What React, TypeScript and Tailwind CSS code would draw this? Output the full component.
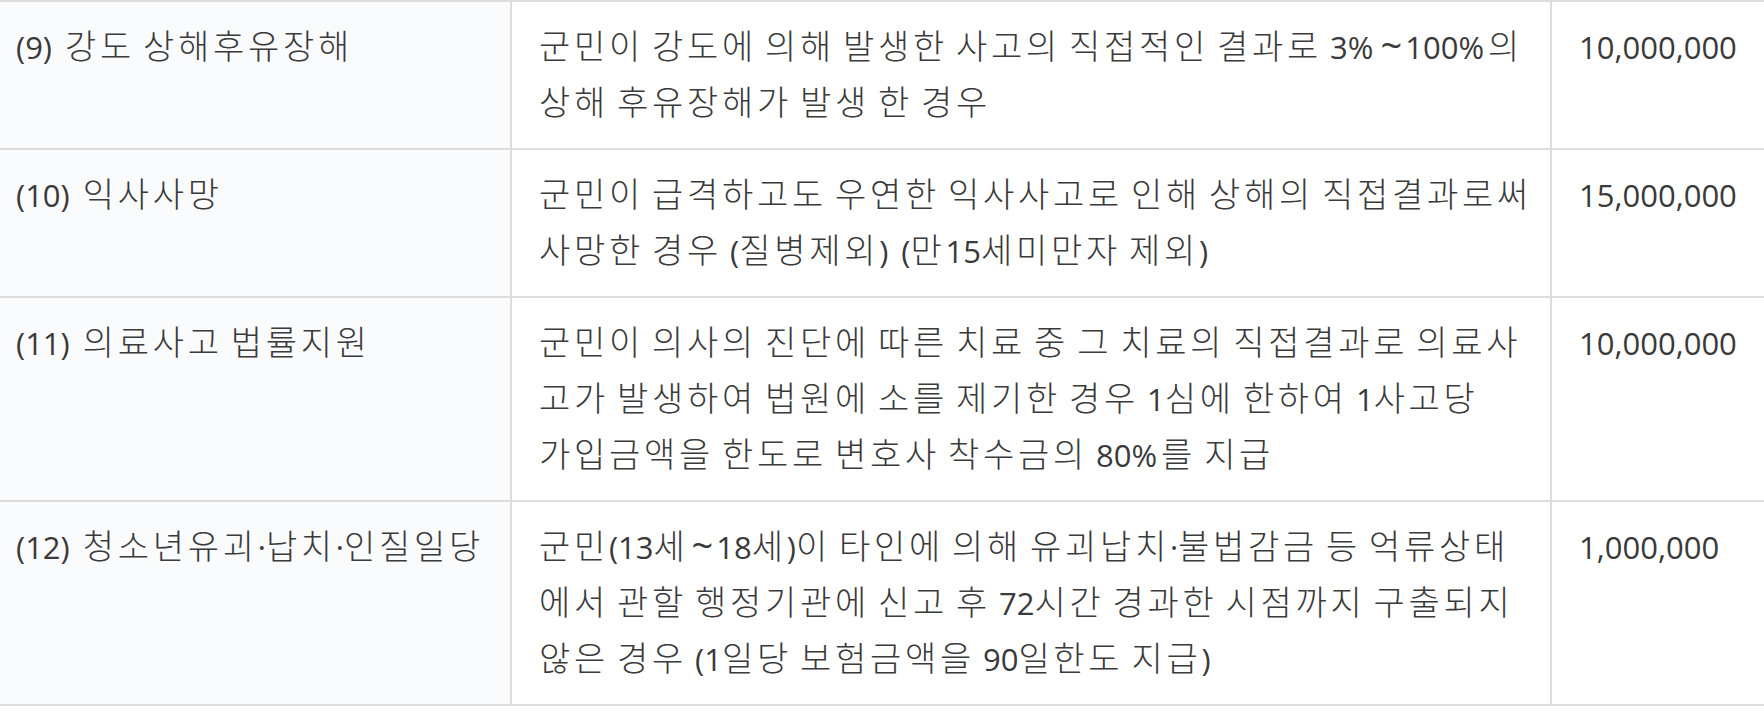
import React from "react";

type Row = { name: string; desc: string[]; amount: string };

const rows: Row[] = [
  {
    name: "(9) 강도 상해후유장해",
    desc: ["군민이 강도에 의해 발생한 사고의 직접적인 결과로 3%~100%의", "상해 후유장해가 발생 한 경우"],
    amount: "10,000,000",
  },
  {
    name: "(10) 익사사망",
    desc: ["군민이 급격하고도 우연한 익사사고로 인해 상해의 직접결과로써", "사망한 경우 (질병제외) (만15세미만자 제외)"],
    amount: "15,000,000",
  },
  {
    name: "(11) 의료사고 법률지원",
    desc: [
      "군민이 의사의 진단에 따른 치료 중 그 치료의 직접결과로 의료사",
      "고가 발생하여 법원에 소를 제기한 경우 1심에 한하여 1사고당",
      "가입금액을 한도로 변호사 착수금의 80%를 지급",
    ],
    amount: "10,000,000",
  },
  {
    name: "(12) 청소년유괴·납치·인질일당",
    desc: [
      "군민(13세~18세)이 타인에 의해 유괴납치·불법감금 등 억류상태",
      "에서 관할 행정기관에 신고 후 72시간 경과한 시점까지 구출되지",
      "않은 경우 (1일당 보험금액을 90일한도 지급)",
    ],
    amount: "1,000,000",
  },
];

const HANGUL = /[\uAC00-\uD7A3]/;

function Latin({ p, afterHangul }: { p: string; afterHangul: boolean }) {
  const toks = p.split(/([%~ ])/).filter((t) => t !== "");
  return (
    <>
      {toks.map((t, i) => {
        if (t === "%") return <span key={i} className="tracking-[4px]">%</span>;
        if (t === "~")
          return (
            <span key={i} className="text-[38px] leading-none mx-[3px]">
              ~
            </span>
          );
        if (t === " " && !(i === 0 && afterHangul))
          return <span key={i} className="mr-[5px]"> </span>;
        return <span key={i}>{t}</span>;
      })}
    </>
  );
}

function Txt({ s }: { s: string }) {
  const parts = s.split(/([\uAC00-\uD7A3]+)/);
  return (
    <>
      {parts.map((p, i) =>
        HANGUL.test(p) ? (
          <span key={i} className="text-[34px] leading-none tracking-[3.7px] font-light">
            {p}
          </span>
        ) : (
          <Latin key={i} p={p} afterHangul={i > 0} />
        )
      )}
    </>
  );
}

export default function App() {
  return (
    <div
      className="w-[1764px] h-[712px] overflow-hidden bg-white text-[#3a3a3a] text-[31px] leading-[56px]"
      style={{ fontFamily: '"Open Sans", "Noto Sans CJK KR", sans-serif' }}
    >
      <div className="grid grid-cols-[512px_1040px_1fr] border-t-2 border-[#dcdcdc]">
        {rows.map((r, i) => (
          <React.Fragment key={i}>
            <div className="bg-[#fafbfd] border-r-2 border-b-2 border-[#dcdcdc] pl-[16px] pr-[10px] pt-[17px] pb-[17px] whitespace-nowrap">
              <Txt s={r.name} />
            </div>
            <div className="border-r-2 border-b-2 border-[#dcdcdc] pl-[27px] pr-[20px] pt-[17px] pb-[17px]">
              {r.desc.map((l, j) => (
                <div key={j} className="whitespace-nowrap">
                  <Txt s={l} />
                </div>
              ))}
            </div>
            <div className="border-b-2 border-[#dcdcdc] pl-[27px] pt-[17px] pb-[17px]">{r.amount}</div>
          </React.Fragment>
        ))}
      </div>
    </div>
  );
}
